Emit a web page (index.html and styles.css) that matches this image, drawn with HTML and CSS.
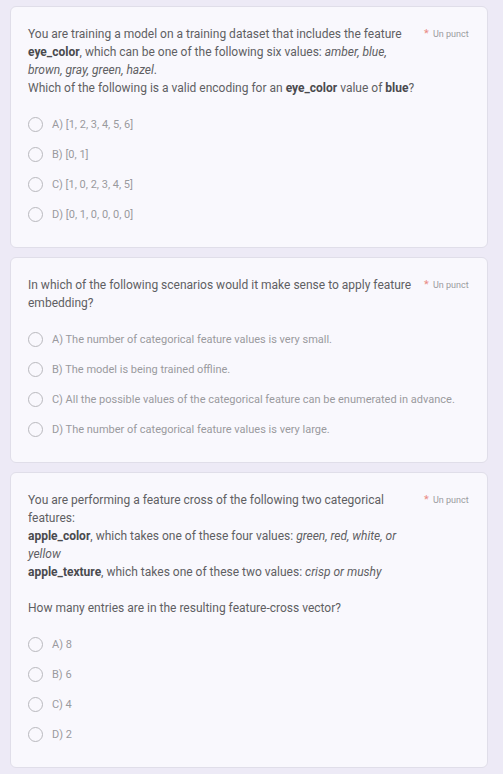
FILE: index.html
```html
<!DOCTYPE html>
<html>
<head>
<meta charset="utf-8">
<link rel="stylesheet" href="styles.css">
</head>
<body>
<main class="form">
  <section class="card">
    <div class="head">
      <div class="title">You are training a model on a training dataset that includes the feature <b>eye_color</b>, which can be one of the following six values: <i>amber, blue, brown, gray, green, hazel</i>.<br>Which of the following is a valid encoding for an <b>eye_color</b> value of <b>blue</b>?</div>
      <div class="points"><span class="req">*</span> Un punct</div>
    </div>
    <ul class="options">
      <li><span class="radio"></span>A) [1, 2, 3, 4, 5, 6]</li>
      <li><span class="radio"></span>B) [0, 1]</li>
      <li><span class="radio"></span>C) [1, 0, 2, 3, 4, 5]</li>
      <li><span class="radio"></span>D) [0, 1, 0, 0, 0, 0]</li>
    </ul>
  </section>
  <section class="card">
    <div class="head">
      <div class="title">In which of the following scenarios would it make sense to apply feature embedding?</div>
      <div class="points"><span class="req">*</span> Un punct</div>
    </div>
    <ul class="options">
      <li><span class="radio"></span>A) The number of categorical feature values is very small.</li>
      <li><span class="radio"></span>B) The model is being trained offline.</li>
      <li><span class="radio"></span>C) All the possible values of the categorical feature can be enumerated in advance.</li>
      <li><span class="radio"></span>D) The number of categorical feature values is very large.</li>
    </ul>
  </section>
  <section class="card">
    <div class="head">
      <div class="title">You are performing a feature cross of the following two categorical features:<br><b>apple_color</b>, which takes one of these four values: <i>green, red, white, or yellow</i><br><b>apple_texture</b>, which takes one of these two values: <i>crisp or mushy</i><br><br>How many entries are in the resulting feature-cross vector?</div>
      <div class="points"><span class="req">*</span> Un punct</div>
    </div>
    <ul class="options">
      <li><span class="radio"></span>A) 8</li>
      <li><span class="radio"></span>B) 6</li>
      <li><span class="radio"></span>C) 4</li>
      <li><span class="radio"></span>D) 2</li>
    </ul>
  </section>
</main>
</body>
</html>
```
FILE: styles.css
```css
html, body {
  margin: 0;
  padding: 0;
  background: #edeaf6;
}
body {
  font-family: Roboto, "Liberation Sans", sans-serif;
}
.form {
  display: flex;
  flex-direction: column;
  gap: 9px;
  padding: 6px 15px 6px 10px;
}
.card {
  background: #f9f8fd;
  border: 1px solid #e0dee9;
  border-radius: 6px;
  padding: 18px 17px 18px 17px;
}
.head {
  display: flex;
  align-items: flex-start;
}
.title {
  width: 390px;
  font-size: 12px;
  line-height: 18px;
  color: #5f5f63;
}
.title b {
  font-weight: 700;
  color: #4a4a4e;
}
.points {
  margin-left: 6px;
  font-size: 9px;
  line-height: 18px;
  color: #9a9a9e;
  white-space: nowrap;
}
.req {
  color: #e98b85;
  font-size: 11px;
  margin-right: 2px;
}
.options {
  list-style: none;
  margin: 12px 0 0 0;
  padding: 0;
}
.options li {
  display: flex;
  align-items: center;
  height: 30px;
  font-size: 11px;
  color: #9a9a9e;
}
.radio {
  width: 13px;
  height: 13px;
  border: 1px solid #b9b9be;
  border-radius: 50%;
  margin-right: 9px;
  flex: none;
}
```
